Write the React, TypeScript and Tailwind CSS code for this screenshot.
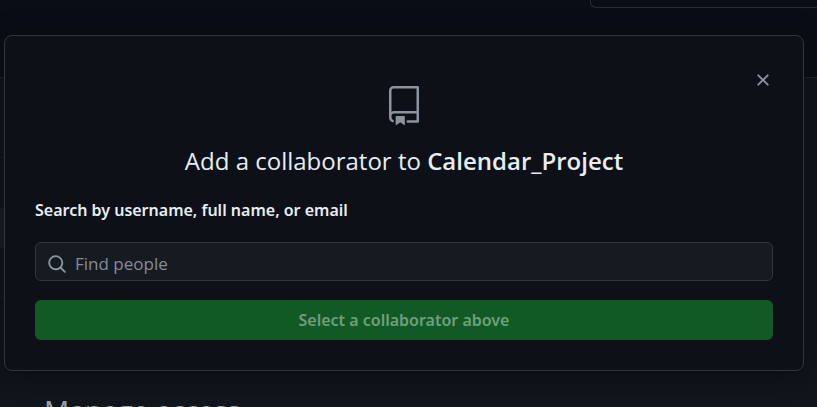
function RepoIcon() {
  return (
    <svg viewBox="0 0 24 24" className="size-10 fill-[#8b949e]" aria-hidden="true">
      <path d="M3 2.75A2.75 2.75 0 0 1 5.75 0h14.5a.75.75 0 0 1 .75.75v20.5a.75.75 0 0 1-.75.75h-6a.75.75 0 0 1 0-1.5h5.25v-4H6A1.5 1.5 0 0 0 4.5 18v.75c0 .716.43 1.334 1.05 1.605a.75.75 0 0 1-.6 1.374A3.251 3.251 0 0 1 3 18.75ZM19.5 1.5H5.75c-.69 0-1.25.56-1.25 1.25v12.651A2.989 2.989 0 0 1 6 15h13.5Z" />
      <path d="M7 18.25a.25.25 0 0 1 .25-.25h5a.25.25 0 0 1 .25.25v5.01a.25.25 0 0 1-.397.201l-2.206-1.604a.25.25 0 0 0-.294 0L7.397 23.46a.25.25 0 0 1-.397-.2v-5.01Z" />
    </svg>
  );
}

function CloseIcon() {
  return (
    <svg viewBox="0 0 16 16" className="size-5 fill-current" aria-hidden="true">
      <path d="M3.72 3.72a.75.75 0 0 1 1.06 0L8 6.94l3.22-3.22a.749.749 0 0 1 1.275.326.749.749 0 0 1-.215.734L9.06 8l3.22 3.22a.749.749 0 0 1-.326 1.275.749.749 0 0 1-.734-.215L8 9.06l-3.22 3.22a.751.751 0 0 1-1.042-.018.751.751 0 0 1-.018-1.042L6.94 8 3.72 4.78a.75.75 0 0 1 0-1.06Z" />
    </svg>
  );
}

function SearchIcon() {
  return (
    <svg viewBox="0 0 16 16" className="size-5 shrink-0 fill-[#8b949e]" aria-hidden="true">
      <path d="M10.68 11.74a6 6 0 0 1-7.922-8.982 6 6 0 0 1 8.982 7.922l3.04 3.04a.749.749 0 0 1-.326 1.275.749.749 0 0 1-.734-.215ZM11.5 7a4.499 4.499 0 1 0-8.997 0A4.499 4.499 0 0 0 11.5 7Z" />
    </svg>
  );
}

// Settings page that stays dimmed behind the dialog
function PageBehind() {
  return (
    <div className="flex h-screen flex-col overflow-hidden bg-[#090d15]">
      <div className="flex h-[77px] shrink-0 items-start justify-end">
        <div className="h-2 w-[227px] rounded-bl-md border-b border-l border-[#262b33]" />
      </div>
      <div className="flex flex-1 flex-col border-t border-[#262b33] bg-[#11151c]">
        <div className="flex w-1 shrink-0 flex-col">
          <div className="h-20 border-b border-[#1f242b]" />
          <div className="mt-[50px] h-10 bg-[#1c2124]" />
          <div className="h-[50px] border-b border-[#1f242b]" />
        </div>
        <h2 className="mt-[92px] pl-11 text-[28px] leading-10 text-[#9ba0a6]">Manage access</h2>
      </div>
    </div>
  );
}

export default function App() {
  return (
    <main className="font-['Open_Sans','Noto_Sans',sans-serif]">
      <PageBehind />
      <div className="absolute inset-x-0 top-0 pt-[35px] pr-[13px] pl-1">
        <div
          role="dialog"
          aria-labelledby="dialog-title"
          className="relative flex flex-col rounded-lg border border-[#30363d] bg-[#0d1117] px-[30px] pt-[50px] pb-[30px] text-[#e6edf3] shadow-[0_4px_24px_#0b0d0f]"
        >
          <button type="button" aria-label="Close" className="absolute top-[34px] right-[30px] text-[#8b949e]">
            <CloseIcon />
          </button>
          <div className="flex flex-col items-center gap-5">
            <RepoIcon />
            <h1 id="dialog-title" className="text-[24px] leading-[30px]">
              Add a collaborator to <strong className="font-semibold">Calendar_Project</strong>
            </h1>
          </div>
          <form className="mt-5 flex flex-col">
            <label htmlFor="people" className="font-['Noto_Sans','Open_Sans',sans-serif] text-base leading-7 font-semibold">
              Search by username, full name, or email
            </label>
            <div className="mt-[18px] flex h-[39px] items-center gap-2 rounded-md border border-[#30363d] bg-[#161b22] pt-1 pr-3 pl-[11px]">
              <SearchIcon />
              <input
                id="people"
                type="text"
                placeholder="Find people"
                className="min-w-0 flex-1 bg-transparent text-[17px] leading-6 outline-none placeholder:text-[#858c95]"
              />
            </div>
            <button
              type="button"
              disabled
              className="mt-[19px] h-10 rounded-md bg-[#125a25] font-['Noto_Sans','Open_Sans',sans-serif] text-base leading-6 font-semibold text-[#6f9f7b]"
            >
              Select a collaborator above
            </button>
          </form>
        </div>
      </div>
    </main>
  );
}
